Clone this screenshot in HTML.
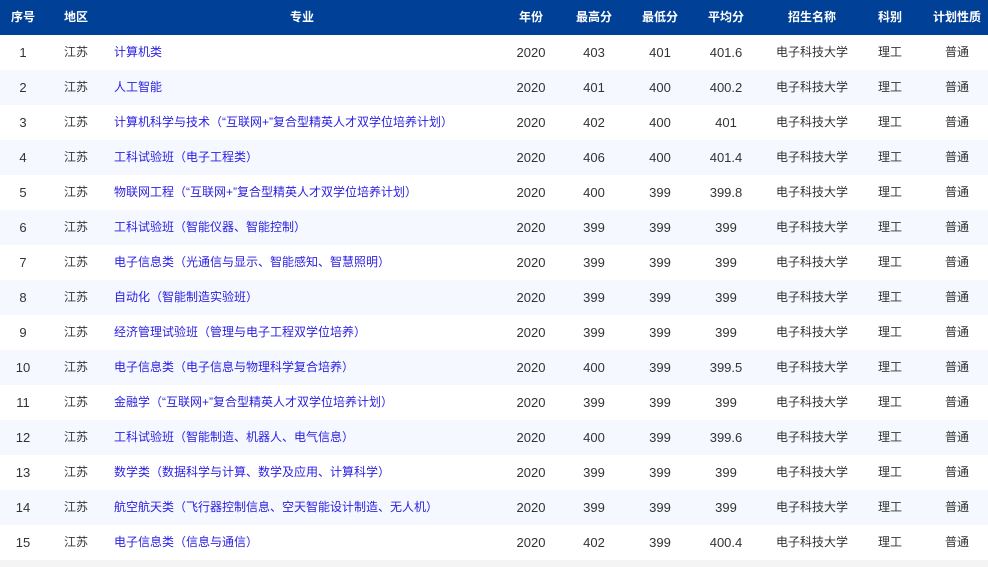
<!DOCTYPE html>
<html><head><meta charset="utf-8"><style>
body{margin:0;width:988px;height:567px;overflow:hidden;background:#f4f4f4;font-family:"Liberation Sans","Noto Sans CJK SC",sans-serif;font-size:12px;color:#333}
.r{position:absolute;left:0;width:988px;height:35px;line-height:35px}
.r div{position:absolute;top:0;text-align:center;white-space:nowrap}
.n{font-size:13px}
.h{background:#004097;color:#fff;font-weight:bold;top:0}
.o{background:#fff}.e{background:#f5f8fe}
.m{color:#2a1ee0;text-align:left!important}
</style></head><body>
<div class="r h"><div style="left:0;width:46px">序号</div><div style="left:63px;width:26px">地区</div><div style="left:252px;width:100px">专业</div><div style="left:501px;width:60px">年份</div><div style="left:564px;width:60px">最高分</div><div style="left:630px;width:60px">最低分</div><div style="left:696px;width:60px">平均分</div><div style="left:762px;width:100px">招生名称</div><div style="left:860px;width:60px">科别</div><div style="left:922px;width:70px">计划性质</div></div>
<div id="b"></div>
<script>
var d=[["计算机类",403,401,"401.6"],["人工智能",401,400,"400.2"],["计算机科学与技术（“互联网+”复合型精英人才双学位培养计划）",402,400,"401"],["工科试验班（电子工程类）",406,400,"401.4"],["物联网工程（“互联网+”复合型精英人才双学位培养计划）",400,399,"399.8"],["工科试验班（智能仪器、智能控制）",399,399,"399"],["电子信息类（光通信与显示、智能感知、智慧照明）",399,399,"399"],["自动化（智能制造实验班）",399,399,"399"],["经济管理试验班（管理与电子工程双学位培养）",399,399,"399"],["电子信息类（电子信息与物理科学复合培养）",400,399,"399.5"],["金融学（“互联网+”复合型精英人才双学位培养计划）",399,399,"399"],["工科试验班（智能制造、机器人、电气信息）",400,399,"399.6"],["数学类（数据科学与计算、数学及应用、计算科学）",399,399,"399"],["航空航天类（飞行器控制信息、空天智能设计制造、无人机）",399,399,"399"],["电子信息类（信息与通信）",402,399,"400.4"]];
var h="";d.forEach(function(x,i){h+='<div class="r '+(i%2?'e':'o')+'" style="top:'+(35+i*35)+'px"><div class="n" style="left:0;width:46px">'+(i+1)+'</div><div style="left:63px;width:26px">江苏</div><div class="m" style="left:114px">'+x[0]+'</div><div class="n" style="left:501px;width:60px">2020</div><div class="n" style="left:564px;width:60px">'+x[1]+'</div><div class="n" style="left:630px;width:60px">'+x[2]+'</div><div class="n" style="left:696px;width:60px">'+x[3]+'</div><div style="left:762px;width:100px">电子科技大学</div><div style="left:860px;width:60px">理工</div><div style="left:922px;width:70px">普通</div></div>'});
document.getElementById("b").innerHTML=h;
</script>
</body></html>
